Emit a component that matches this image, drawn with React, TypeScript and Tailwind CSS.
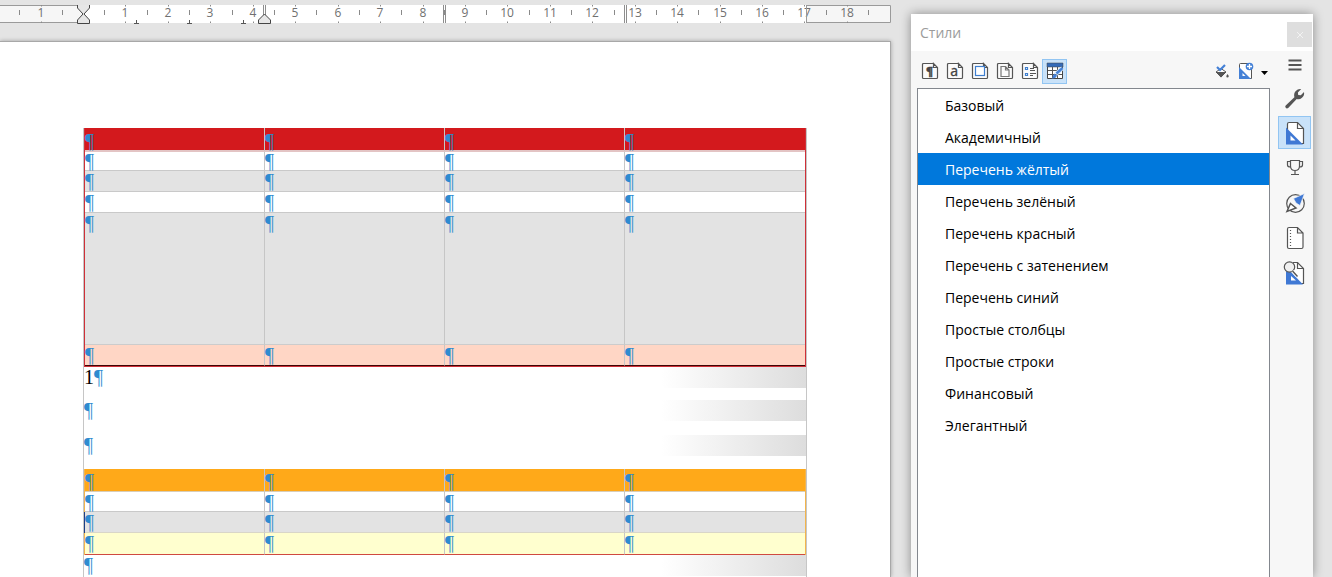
import { useState } from "react";
import type { ReactNode } from "react";

const UNIT = 42.44;
const ORIGIN = 83;

function Ruler() {
  const numbers = Array.from({ length: 20 }, (_, i) => i - 1).filter((n) => n !== 0 && n < 19);
  return (
    <svg className="block h-5 w-full overflow-hidden" role="img" aria-label="Линейка">
      <rect x="0" y="0" width="891" height="18" fill="#f6f6f6" />
      <path d="M0 .5H83M0 17.5H83M806.5 .5H890.5V17.5H806.5Z" fill="none" stroke="#9a9a9a" />
      <rect x="83" y="0" width="723" height="18" fill="#fff" />
      {numbers.map((n) => {
        const x = Math.round(ORIGIN + n * UNIT) + 0.5;
        return (
          <g key={n}>
            <path d={`M${x} 0v1.500M${x} 16.500v1.500`} stroke="#8a8a8a" />
            <text x={x - 0.5} y="12" textAnchor="middle" fontSize="12" fill="#707070" fontFamily="Open Sans, sans-serif">
              {Math.abs(n)}
            </text>
          </g>
        );
      })}
      {Array.from({ length: 21 }, (_, i) => i - 2).map((n) => {
        const x = Math.round(ORIGIN + (n + 0.5) * UNIT) + 0.5;
        return <path key={n} d={`M${x} 5v5`} stroke="#8a8a8a" />;
      })}
      <path d="M806.5 0V18" stroke="#9a9a9a" />
      {[136, 189, 243].map((x) => (
        <path key={x} d={`M${x + 0.5} 15v3M${x - 2} 18.5h5`} stroke="#555" fill="none" />
      ))}
      {[263, 443, 624].map((x) => (
        <path key={x} d={`M${x + 0.5} 0v18M${x + 2.5} 0v18`} stroke="#8e8e8e" />
      ))}
      <path d="M77.500 -.5H89.500V3L84 9L89.500 15V18.500H77.500V15L83 9L77.500 3Z" fill="#e6e6e6" stroke="#444" />
      <path d="M258.500 18.500V15L264.500 9L270.500 15V18.500Z" fill="#e6e6e6" stroke="#444" />
    </svg>
  );
}

const Mark = () => <span className="text-[#2f8bd0]">¶</span>;

function StyledTable({ rows, edge, label }: { rows: string[]; edge: string; label: string }) {
  return (
    <table aria-label={label} className={`w-full table-fixed border-separate border-spacing-0 ${edge}`}>
      <tbody>
        {rows.map((row, r) => (
          <tr key={r}>
            {[0, 1, 2, 3].map((c) => (
              <td
                key={c}
                className={`border-r border-r-[#c6c6c6] p-0 align-top leading-[18px] last:border-r-0 ${row}`}
              >
                <Mark />
              </td>
            ))}
          </tr>
        ))}
      </tbody>
    </table>
  );
}

const redRows = [
  "h-6 border-b-2 border-b-[#e3c4c4] bg-[#d3191d] pt-1",
  "h-[19px] border-b border-b-[#c9c9c9] bg-white",
  "h-[21px] border-b border-b-[#c9c9c9] bg-[#e3e3e3] pt-px",
  "h-[21px] border-b border-b-[#c9c9c9] bg-white pt-px",
  "h-[132px] border-b border-b-[#cccccc] bg-[#e3e3e3] pt-px",
  "h-[21px] border-b border-b-[#3c0505] bg-[#ffd6c5] pt-px",
];

const yellowRows = [
  "h-[23px] border-b border-b-[#d8cdb8] bg-[#ffa919] pt-[3px]",
  "h-5 border-b border-b-[#c9c9c9] bg-white pt-px",
  "h-[21px] border-b border-b-[#d9d6c8] bg-[#e3e3e3] pt-px first:shadow-[-1px_0_0_#1b3f84]",
  "h-[22px] border-b border-b-[#cf4a40] bg-[#ffffcf] pt-px",
];

function Paragraph({ children }: { children?: ReactNode }) {
  return (
    <p className="h-[21px] bg-linear-to-r from-white from-80% to-[#dddddd] leading-5">
      {children}
      <Mark />
    </p>
  );
}

function Sheet({ children }: { children?: ReactNode }) {
  return (
    <svg width="18" height="18" viewBox="0 0 18 18" fill="none" stroke="#555" strokeWidth="1.2">
      <path d="M12.500 1.500H2.500Q1.500 1.500 1.500 2.500V15.500Q1.500 16.500 2.500 16.500H15.500Q16.500 16.500 16.500 15.500V5.500L12.500 1.500V5.500H16.500" fill="#fbfbfb" />
      {children}
    </svg>
  );
}

const ParagraphIcon = () => (
  <Sheet>
    <text x="8.500" y="13" textAnchor="middle" fontSize="13" fontWeight="700" fontFamily="Liberation Serif, serif" fill="#444" stroke="#444" strokeWidth=".5">¶</text>
  </Sheet>
);
const CharacterIcon = () => (
  <Sheet>
    <text x="8.300" y="13.500" textAnchor="middle" fontSize="14" fontFamily="Noto Sans, sans-serif" fill="#444" stroke="#444" strokeWidth=".3">a</text>
  </Sheet>
);
const FrameIcon = () => (
  <Sheet>
    <rect x="4.500" y="4.500" width="9" height="9" fill="#fff" stroke="#3f7fcf" />
  </Sheet>
);
const PageIcon = () => (
  <Sheet>
    <path d="M5 4.500H9.500L13 8V14.500H5ZM9.500 4.500V8H13" stroke="#777" />
  </Sheet>
);
const ListIcon = () => (
  <Sheet>
    <path d="M4.500 5.500h2v2H4.500zM4.500 11.500h2v2H4.500z" stroke="#3f7fcf" />
    <path d="M9 6.500H13M9 11.500H15M9 13.500H12M9 8.500H14" strokeWidth="1" />
  </Sheet>
);
const TableIcon = () => (
  <svg width="18" height="18" viewBox="0 0 18 18" fill="none">
    <path d="M1.500 2H16.500V16.500H1.500Z" fill="#fff" stroke="#444" />
    <path d="M1 1H17V5H1Z" fill="#356bb8" stroke="#444" strokeWidth=".5" />
    <path d="M2 8.500H16M2 12.500H16M6.500 5V16M11.500 5V16" stroke="#555" />
    <path d="M16.500 6L10 12" stroke="#d5e9fb" strokeWidth="4" />
    <path d="M16.500 6L10.500 11.500" stroke="#4480d6" strokeWidth="2.400" />
    <path d="M8.500 11.500L11 13.500Q10 17 5.500 16.500Q7 15.500 7 13.500Z" fill="#4480d6" />
  </svg>
);

const FillIcon = () => (
  <svg width="16" height="16" viewBox="0 0 16 16" fill="none">
    <path d="M2 9L7 5.500L12 9L7 14Z" fill="#fff" stroke="#555" />
    <path d="M2 9H12L7 14.500Z" fill="#555" />
    <path d="M3 4L6 7L11 2" stroke="#4480d6" strokeWidth="2.200" />
    <path d="M13.500 11L14.800 13Q14.500 14.500 13.500 14.500Q12.200 14.500 12.300 13Z" fill="#555" />
  </svg>
);
const NewStyleIcon = () => (
  <svg width="16" height="18" viewBox="0 0 16 18" fill="none">
    <path d="M1.500 16V2.500Q1.500 1.500 2.500 1.500H10L13.500 5V16.500H3" fill="#fff" stroke="#555" />
    <path d="M1 5L13 17H1Z" fill="#4480d6" />
    <path d="M4.500 11V14H7.500Z" fill="#fff" />
    <circle cx="11.500" cy="4.500" r="3.800" fill="#4480d6" />
    <path d="M11.500 2V7M9 4.500H14" stroke="#fff" strokeWidth="1.300" />
  </svg>
);

const Deck = ({ children }: { children: ReactNode }) => (
  <svg width="24" height="24" viewBox="0 0 24 24" fill="none" stroke="#555" strokeWidth="1.200">{children}</svg>
);
const MenuIcon = () => (
  <Deck><path d="M5.500 7.500H18.500M5.500 12H18.500M5.500 16.500H18.500" strokeWidth="1.800" /></Deck>
);
const WrenchIcon = () => (
  <Deck>
    <path d="M2.700 19.600L11.400 11.200Q10.400 7.500 12.800 5Q15 2.500 18.200 3.100L14.900 6.400L15.200 8.900L17.800 9.200L21 6Q21.700 9.600 19 11.800Q16.600 13.900 13.700 13.100L5.200 22Q3.800 23 2.700 21.800Q1.700 20.700 2.700 19.600Z" fill="#555" stroke="none" />
  </Deck>
);
const StylesIcon = () => (
  <Deck>
    <path d="M4.500 21V3Q4.500 1.500 6 1.500H14.500L20.500 7.500V22.500H7" fill="#fff" />
    <path d="M14.500 1.500V7.500H20.500" />
    <path d="M3 6.500L20 23.500H3Z" fill="#3f78d4" stroke="none" />
    <path d="M7.500 14.500V19.500H12.500Z" fill="#fff" stroke="none" />
  </Deck>
);
const TrophyIcon = () => (
  <Deck>
    <path d="M7.500 4.500H16.500V10Q16.500 14.500 12 14.500Q7.500 14.500 7.500 10ZM12 14.500V18.500M8 18.500H16M7.500 5.500H4.500V9Q4.500 11 7.500 11M16.500 5.500H19.500V9Q19.500 11 16.500 11" />
  </Deck>
);
const NavigatorIcon = () => (
  <Deck>
    <circle cx="12.500" cy="12.500" r="8.800" />
    <path d="M21.500 2.500L10.500 7.500L13 12L17 14.500Z" fill="#3f78d4" stroke="#f7f7f7" strokeWidth=".7" />
    <path d="M7.500 12.500L13 17L4 20.500Z" fill="#fff" strokeWidth="1.500" />
  </Deck>
);
const DocumentIcon = () => (
  <Deck>
    <path d="M6 1.500H14.500L20 7V21Q20 22.500 18.500 22.500H6Q4.500 22.500 4.500 21V3Q4.500 1.500 6 1.500ZM14.500 1.500V7H20" fill="#fff" />
    <path d="M7.500 4V21" strokeDasharray="1 2" />
  </Deck>
);
const InspectorIcon = () => (
  <Deck>
    <path d="M10 1.500H14.500L20.500 7.500V22.500H4.500V11" fill="#fff" />
    <path d="M14.500 1.500V7.500H20.500" />
    <path d="M3 10V23.500H20L8 11Z" fill="#3f78d4" stroke="none" />
    <path d="M8 15V19.500H13Z" fill="#fff" stroke="none" />
    <circle cx="6.500" cy="6" r="5.200" fill="#eee" fillOpacity=".85" />
    <path d="M9.500 10L14 15" stroke="#fff" strokeWidth="3" />
    <path d="M9.500 10L14.500 15.500" strokeWidth="1.400" />
  </Deck>
);

const categories = [
  { label: "Стили абзаца", icon: <ParagraphIcon /> },
  { label: "Стили символов", icon: <CharacterIcon /> },
  { label: "Стили врезок", icon: <FrameIcon /> },
  { label: "Стили страниц", icon: <PageIcon /> },
  { label: "Стили списков", icon: <ListIcon /> },
  { label: "Стили таблиц", icon: <TableIcon /> },
];

const decks = [
  { label: "Свойства", icon: <WrenchIcon /> },
  { label: "Стили", icon: <StylesIcon /> },
  { label: "Галерея", icon: <TrophyIcon /> },
  { label: "Навигатор", icon: <NavigatorIcon /> },
  { label: "Страница", icon: <DocumentIcon /> },
  { label: "Инспектор стилей", icon: <InspectorIcon /> },
];

const styleNames = [
  "Базовый",
  "Академичный",
  "Перечень жёлтый",
  "Перечень зелёный",
  "Перечень красный",
  "Перечень с затенением",
  "Перечень синий",
  "Простые столбцы",
  "Простые строки",
  "Финансовый",
  "Элегантный",
];

function StylesPanel() {
  const [category, setCategory] = useState(5);
  const [deck, setDeck] = useState(1);
  const [selected, setSelected] = useState(2);
  return (
    <aside className="mt-[14px] mr-[19px] ml-5 flex w-[402px] shrink-0 flex-col bg-[#f7f7f7] font-['Open_Sans','Noto_Sans',sans-serif] shadow-[0_0_10px_rgba(0,0,0,0.4)]">
      <header className="flex h-[37px] items-center justify-between bg-white pr-px pl-[9px]">
        <h2 className="text-sm text-[#9b9b9b]">Стили</h2>
        <button aria-label="Закрыть" className="mt-1 flex size-[25px] items-center justify-center bg-[#dedede] text-[#f2f2f2]">
          <svg width="8" height="8" viewBox="0 0 8 8" stroke="currentColor"><path d="M1 1L7 7M7 1L1 7" /></svg>
        </button>
      </header>
      <div className="flex flex-1">
        <div className="flex flex-1 flex-col pl-[6px]">
          <div className="flex h-[37px] items-center pt-[3px]">
            {categories.map((item, i) => (
              <button
                key={item.label}
                aria-label={item.label}
                onClick={() => setCategory(i)}
                className={`flex size-[25px] items-center justify-center border ${category === i ? "border-[#92c5f2] bg-[#c9e2f9]" : "border-transparent"}`}
              >
                {item.icon}
              </button>
            ))}
            <button aria-label="Режим заливки" className="ml-auto"><FillIcon /></button>
            <button aria-label="Создать стиль" className="ml-2"><NewStyleIcon /></button>
            <button aria-label="Действия со стилями" className="mr-px ml-[6px] pt-[2px]">
              <svg width="9" height="8" viewBox="0 0 9 8"><path d="M1 3H8L4.500 7Z" fill="#000" /></svg>
            </button>
          </div>
          <ul aria-label="Список стилей" className="flex-1 border border-b-0 border-[#83878e] bg-white">
            {styleNames.map((name, i) => (
              <li key={name}>
                <button
                  aria-pressed={selected === i}
                  onClick={() => setSelected(i)}
                  className={`h-8 w-full pt-px pl-[27px] text-left text-sm ${selected === i ? "bg-[#0078dc] text-white" : "text-black"}`}
                >
                  {name}
                </button>
              </li>
            ))}
          </ul>
        </div>
        <nav className="flex w-[43px] flex-col items-center gap-[2px] pr-[2px] pl-2">
          <button aria-label="Настройки боковой панели" className="flex h-7 w-[33px] items-center justify-center"><MenuIcon /></button>
          {decks.map((item, i) => (
            <button
              key={item.label}
              aria-label={item.label}
              onClick={() => setDeck(i)}
              className={`flex size-[33px] shrink-0 items-center justify-center border ${deck === i ? "border-[#92c5f2] bg-[#c9e2f9]" : "border-transparent"}`}
            >
              {item.icon}
            </button>
          ))}
        </nav>
      </div>
    </aside>
  );
}

export default function App() {
  return (
    <div className="flex min-h-screen bg-[#e4e4e4]">
      <main className="flex min-w-0 flex-1 flex-col pt-[5px]">
        <Ruler />
        <article className="mt-4 flex flex-1 flex-col border-t border-r border-[#a8a8a8] bg-white pt-[86px] pr-[83px] pl-[83px] font-['Liberation_Serif',serif] text-[20px] leading-5 shadow-[0_0_4px_rgba(0,0,0,0.3)]">
          <div className="flex-1 border-x border-[#c6c6c6]">
            <StyledTable label="Перечень красный" rows={redRows} edge="border-x border-b border-[#cf3038]" />
            <Paragraph>1</Paragraph>
            <div className="h-3" />
            <Paragraph />
            <div className="h-[14px]" />
            <Paragraph />
            <div className="h-[13px]" />
            <StyledTable label="Перечень жёлтый" rows={yellowRows} edge="border-x border-[#f3b44c]" />
            <Paragraph />
          </div>
        </article>
      </main>
      <StylesPanel />
    </div>
  );
}
